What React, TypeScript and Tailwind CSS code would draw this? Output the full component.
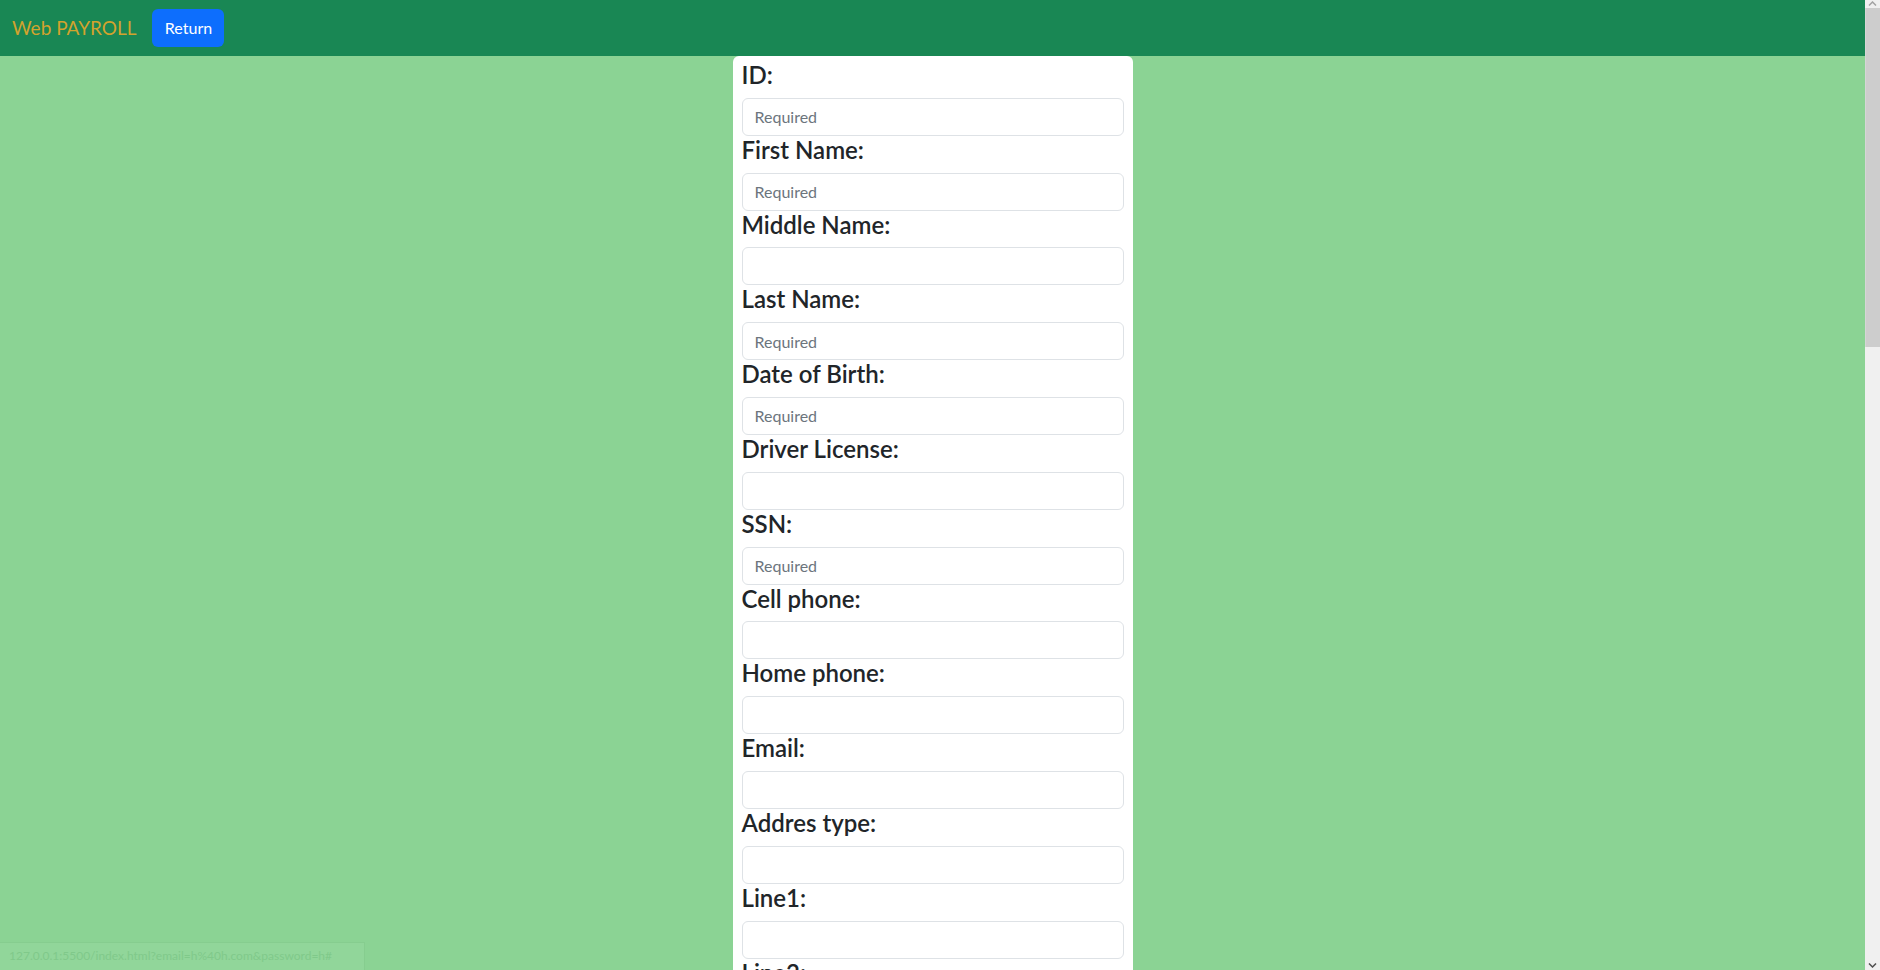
import React from "react";

const fields: { label: string; required?: boolean }[] = [
  { label: "ID:", required: true },
  { label: "First Name:", required: true },
  { label: "Middle Name:" },
  { label: "Last Name:", required: true },
  { label: "Date of Birth:", required: true },
  { label: "Driver License:" },
  { label: "SSN:", required: true },
  { label: "Cell phone:" },
  { label: "Home phone:" },
  { label: "Email:" },
  { label: "Addres type:" },
  { label: "Line1:" },
  { label: "Line2:" },
  { label: "City:" },
  { label: "State:" },
  { label: "Zip Code:" },
  { label: "Country:" },
  { label: "Hire Date:" },
  { label: "Department:" },
  { label: "Position:" },
  { label: "Pay Rate:" },
  { label: "Pay Type:" },
  { label: "Bank:" },
  { label: "Account Number:" },
  { label: "Routing Number:" },
  { label: "Emergency Contact:" },
  { label: "Emergency Phone:" },
  { label: "Notes:" },
];

function Scrollbar() {
  return (
    <div className="flex h-full w-[15px] shrink-0 flex-col bg-[#f0f0f0]">
      <div className="flex h-[8px] items-start justify-center pt-[1px]">
        <svg width="9" height="5" viewBox="0 0 9 5">
          <path d="M1 4.5 L4.5 1 L8 4.5" fill="none" stroke="#a3a3a3" strokeWidth="1.5" />
        </svg>
      </div>
      <div className="h-[339px] border-l border-[#d6d6d6] bg-[#cdcdcd]" />
      <div className="flex-1" />
      <div className="flex h-[8px] items-end justify-center pb-[2px]">
        <svg width="9" height="5" viewBox="0 0 9 5">
          <path d="M1 0.5 L4.5 4 L8 0.5" fill="none" stroke="#505050" strokeWidth="1.5" />
        </svg>
      </div>
    </div>
  );
}

export default function App() {
  return (
    <div
      className="flex h-screen overflow-hidden bg-[#8bd394] text-[#212529]"
      style={{ fontFamily: "Lato, 'Noto Sans', sans-serif" }}
    >
      <div className="relative min-w-0 flex-1 overflow-hidden">
        <nav className="flex items-center bg-[#198754] py-[9px] pl-3">
          <span className="mr-4 text-[19px] leading-[30px] text-[#d2a32d]">Web PAYROLL</span>
          <button className="h-[38px] w-[72px] rounded-[6px] bg-[#0d6efd] text-[16px] text-white">
            Return
          </button>
        </nav>
        <div className="mx-auto w-[400px] rounded-[6px] bg-white px-[9px] pt-[5px] pb-4">
          {fields.map((f) => (
            <div key={f.label}>
              <h4 className="mb-2 text-[24px] font-semibold leading-[28.8px]">{f.label}</h4>
              <input
                className="block h-[38px] w-full rounded-[6px] border border-[#dee2e6] px-3 text-[16px] placeholder:text-[#6c757d] outline-none"
                placeholder={f.required ? "Required" : ""}
              />
            </div>
          ))}
        </div>
        <div className="absolute bottom-0 left-0 h-[28px] w-[365px] border-t border-r border-[#86cd8f] bg-[#91d69a] pl-[9px] text-[12px] leading-[26px] text-[#80c98a]">
          127.0.0.1:5500/index.html?email=h%40h.com&amp;password=h#
        </div>
      </div>
      <Scrollbar />
    </div>
  );
}
